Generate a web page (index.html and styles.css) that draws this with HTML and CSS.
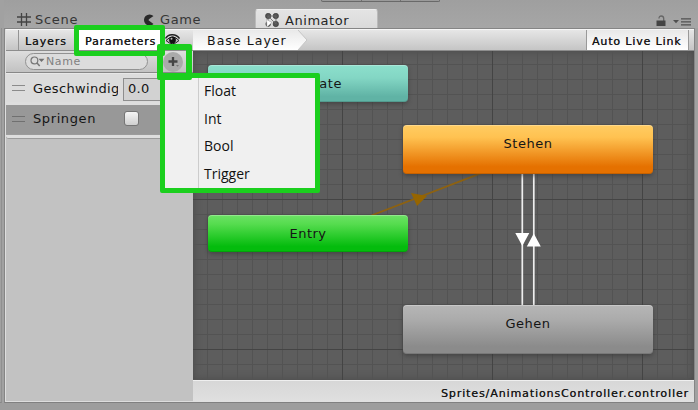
FILE: index.html
```html
<!DOCTYPE html>
<html lang="de">
<head>
<meta charset="utf-8">
<title>Animator</title>
<link rel="stylesheet" href="styles.css">
</head>
<body>
<div class="dock"></div>
<main class="window">
  <nav class="tabs">
    <div class="tab scene">
      <svg width="14" height="14" viewBox="0 0 14 14"><path d="M4.500 0v13M9.500 0v13M0 4h14M0 9h14" stroke="#444" stroke-width="1.3" fill="none"/></svg>
      <span>Scene</span>
    </div>
    <div class="tab game">
      <svg width="12" height="12" viewBox="0 0 12 12"><path d="M10.5 2A5.6 5.6 0 1 0 10.500 10L6.2 6.800Q5 6 6.200 5Z" fill="#292929"/></svg>
      <span>Game</span>
    </div>
    <div class="tab active">
      <svg width="15" height="15" viewBox="0 0 15 15"><g fill="#555" stroke="#333" stroke-width=".6"><circle cx="3.200" cy="3" r="2.700"/><circle cx="10.800" cy="3" r="2.700"/><circle cx="3.200" cy="11" r="2.400"/><circle cx="10.800" cy="11" r="2.700"/></g><path d="M3 3h8v8L3 3v8" fill="none" stroke="#666" stroke-width=".8"/><path d="M1.500 6.500 7 9.500 2 14Z" fill="#fff" stroke="#888" stroke-width=".4"/></svg>
      <span>Animator</span>
    </div>
    <div class="window-tools">
      <svg width="10" height="12" viewBox="0 0 10 12"><path d="M3 3.500Q3 1 5.300 1T7.700 3.500V6" fill="none" stroke="#666" stroke-width="1.300"/><path d="M.5 5.500h9V11h-9z" fill="#444"/></svg>
      <svg width="18" height="8" viewBox="0 0 18 8"><path d="M0 2h6L3 5.200ZM8 .2h10v1.400H8zM8 3.200h10v1.400H8zM8 6.200h10v1.400H8z" fill="#505050"/></svg>
    </div>
  </nav>
  <div class="panes">
    <aside class="sidebar">
      <div class="toolbar side-toolbar">
        <span class="spacer"></span>
        <span class="button layers">Layers</span>
        <span class="button parameters">Parameters</span>
        <svg class="eye" width="15" height="12" viewBox="0 0 15 12"><path d="M.5 4.500Q3 .5 7.500 .7T14.500 4.500" fill="none" stroke="#222" stroke-width="1.400"/><path d="M1 6.500Q7.500-.5 14 6.500Q7.500 13 1 6.500Z" fill="#bbb" stroke="#222"/><circle cx="7.500" cy="6" r="3.400" fill="#111"/><circle cx="6.500" cy="4.700" r="1" fill="#bbb"/></svg>
      </div>
      <div class="search-row">
        <div class="search">
          <svg width="15" height="11" viewBox="0 0 15 11"><circle cx="4.400" cy="4.400" r="3.400" fill="none" stroke="#777" stroke-width="1.200"/><path d="m7 7 2.700 3" stroke="#777" stroke-width="1.500"/><path d="M8.500 2.800h6L11.500 6Z" fill="#707070"/></svg>
          <span>Name</span>
        </div>
        <div class="add"><svg width="12" height="10" viewBox="0 0 12 10"><path d="M6 0v9M1.500 4.500h9" stroke="#444" stroke-width="2.300"/><path d="M9 8h3L10.500 9.700z" fill="#777"/></svg></div>
      </div>
      <div class="parameter">
        <i class="handle"></i><span class="name">Geschwindig</span><span class="value">0.0</span>
      </div>
      <div class="parameter selected">
        <i class="handle"></i><span class="name">Springen</span><span class="check"></span>
      </div>
      <div class="list-end"></div>
    </aside>
    <section class="graph-pane">
      <div class="toolbar graph-toolbar">
        <div class="breadcrumb">
          <svg width="115" height="20" viewBox="0 0 115 20"><defs><linearGradient id="crumb" x2="0" y2="1"><stop stop-color="#e9e9e9"/><stop offset="1" stop-color="#fff"/></linearGradient></defs><path d="M0 0H105L114 10 105 20H0Z" fill="url(#crumb)"/><path d="M105 0 114 10 105 20" fill="none" stroke="#c5c5c5"/></svg>
          <span>Base Layer</span>
        </div>
        <span class="live-link">Auto Live Link</span>
      </div>
      <div class="canvas">
        <svg class="graph" width="501" height="329" viewBox="193 51 501 329">
          <defs>
            <pattern id="minor" x="192" y="49" width="15" height="15" patternUnits="userSpaceOnUse"><path d="M.5 0v15M0 .5h15" stroke="#535353" fill="none"/></pattern>
            <pattern id="major" x="192" y="49" width="150" height="150" patternUnits="userSpaceOnUse"><path d="M.5 0v150M0 .5h150" stroke="#444" fill="none"/></pattern>
          </defs>
          <path d="M193 51h501v329H193z" fill="url(#minor)"/>
          <path d="M193 51h501v329H193z" fill="url(#major)"/>
          <path d="M308 240 528 155" stroke="#8e6210" stroke-width="1.800"/>
          <path d="m411 193 16 3-10 10z" fill="#966500"/>
          <path d="M522.300 150V330M533.800 150V330" stroke="#eee" stroke-width="1.700"/>
          <path d="M515.300 233h14l-7 13zM526.800 246.500h14l-7-13z" fill="#fff"/>
        </svg>
        <div class="node any">Any State</div>
        <div class="node entry">Entry</div>
        <div class="node stehen">Stehen</div>
        <div class="node gehen">Gehen</div>
      </div>
      <footer>Sprites/AnimationsController.controller</footer>
    </section>
  </div>
</main>
<div class="status"></div>
<div class="play-controls"><i></i><i></i><i></i></div>
<div class="mark mark-tab"></div>
<div class="menu"><div>Float</div><div>Int</div><div>Bool</div><div>Trigger</div></div>
<div class="mark mark-add"></div>
</body>
</html>
```
FILE: styles.css
```css
* { box-sizing: border-box; }
body {
  margin: 0;
  width: 698px;
  height: 410px;
  overflow: hidden;
  display: grid;
  grid-template-columns: 4px 1fr;
  grid-template-rows: 403px 7px;
  background: #a1a1a1;
  color: #151515;
  font: 12px "DejaVu Sans", sans-serif;
}
.dock { margin-top: 28px; border-right: 1px solid #909090; width: 2px; border-bottom: 1px solid #888; }
.status { grid-column: 1 / 3; background: #9d9d9d; }
.window { display: flex; flex-direction: column; }
.tabs {
  height: 28px;
  display: flex;
  align-items: flex-end;
  background: linear-gradient(#9f9f9f, #a6a6a6);
  color: #363636;
  font-size: 13px;
}
/* Lower edge of the play buttons that hang in from the main toolbar */
.play-controls {
  position: absolute;
  left: 321px;
  top: 0;
  width: 119px;
  height: 2px;
  display: grid;
  grid-template-columns: repeat(3, 1fr);
  background: #9a9a9a;
  border: 1px solid #696969;
  border-top: 0;
  border-radius: 0 0 3px 3px;
}
.play-controls i + i { border-left: 1px solid #707070; }
.tab { display: flex; align-items: center; height: 17px; white-space: nowrap; }
.tab.scene { margin-left: 13px; width: 126px; gap: 4px; letter-spacing: .7px; }
.tab.game { width: 112px; gap: 5px; letter-spacing: .6px; }
.tab.active {
  width: 123px;
  height: 19px;
  padding: 2px 0 0 9px;
  gap: 5px;
  color: #252525;
  background: linear-gradient(#e4e4e4, #dadada);
  border: 1px solid #bababa;
  border-top-color: #efefef;
  border-bottom: 0;
  border-radius: 3px 3px 0 0;
  letter-spacing: .55px;
}
.window-tools { display: flex; align-items: center; gap: 7px; margin: 0 0 1px auto; padding-right: 7px; }
.window-tools svg:last-child { margin-top: 2px; }
.panes {
  flex: 1;
  display: grid;
  grid-template-columns: 188px 501px;
  width: 691px;
  border: 1px solid #858585;
  border-bottom-color: #808080;
}
.toolbar {
  height: 22px;
  display: flex;
  align-items: center;
  background: linear-gradient(#e6e6e6, #c5c5c5);
  border-top: 1px solid #f6f6f6;
  border-bottom: 1px solid #8d8d8d;
  font-size: 11px;
}
.sidebar { background: #c2c2c2; border-left: 1px solid #dedede; border-bottom: 1px solid #ddd; }
.spacer { width: 13px; height: 20px; border-right: 1px solid #949494; }
.button { height: 20px; line-height: 23px; }
.layers { width: 58px; padding-left: 6px; letter-spacing: .9px; text-shadow: .2px 0 #444; }
.parameters { width: 88px; padding-left: 8px; background: #fff; letter-spacing: .8px; text-shadow: .3px 0 #333; }
.eye { margin: -1px 0 0 0; }
.search-row { height: 22px; display: flex; align-items: center; border-bottom: 1px solid #888; background: linear-gradient(#dedede, #c2c2c2); }
.search {
  width: 123px;
  height: 17px;
  margin-left: 19px;
  padding-left: 4px;
  display: flex;
  align-items: center;
  gap: 1px;
  color: #818181;
  background: #dcdcdc;
  border: 1px solid #929292;
  border-radius: 9px;
  font-size: 11px;
  letter-spacing: .6px;
}
.add { width: 20px; height: 20px; margin-left: 15px; border-radius: 50%; background: #aaa; display: grid; place-items: center; }
.parameter { height: 29px; display: flex; align-items: center; background: #dcdcdc; font-size: 13px; border-top: 1px solid #e7e7e7; }
.handle { width: 13px; height: 6px; margin-left: 6px; border: solid #8b8b8b; border-width: 1px 0; }
.name { width: 85px; margin-left: 8px; overflow: hidden; white-space: nowrap; letter-spacing: .35px; }
.value { width: 68px; height: 23px; margin: 2px 0 0 5px; padding-left: 4px; line-height: 19px; background: #d2d2d2; border: 1px solid #8e8e8e; letter-spacing: .3px; }
.selected { height: 32px; padding-bottom: 2px; background: #989898; border-top: 3px solid #dedede; }
.selected .handle { border-color: #707070; }
.selected .name { letter-spacing: .6px; }
.check { width: 15px; height: 15px; margin-left: 6px; border: 1px solid #757575; border-radius: 3px; background: linear-gradient(#f5f5f5, #cfcfcf); }
.list-end { height: 5px; background: #dedede; border: solid #9c9c9c; border-width: 1px 0; border-radius: 0 0 3px 3px; }
.graph-pane { display: flex; flex-direction: column; min-width: 0; }
.breadcrumb { display: grid; height: 20px; align-items: center; font-size: 12.5px; letter-spacing: 1.05px; }
.breadcrumb > * { grid-area: 1 / 1; }
.breadcrumb span { padding-left: 14px; }
.live-link { margin-left: auto; margin-right: 5px; width: 103px; height: 20px; padding-left: 5px; line-height: 23px; background: linear-gradient(#e8e8e8, #fff); border: solid #999; border-width: 0 1px; letter-spacing: .85px; text-shadow: .2px 0 #444; white-space: nowrap; }
.canvas { position: relative; height: 329px; background: #5d5d5d; box-shadow: inset 0 0 9px #484848; overflow: hidden; }
.graph { display: block; }
.node {
  position: absolute;
  height: 37px;
  width: 200px;
  border-radius: 4px;
  line-height: 37px;
  text-align: center;
  font-size: 13px;
  letter-spacing: .5px;
  box-shadow: 0 2px 4px #3338, inset 0 1px #fff4, inset 0 -1px #0002;
}
.any { left: 15px; top: 14px; background: linear-gradient(#8ce0cc, #83d6c4 35%, #60b3a5 85%); }
.entry { left: 15px; top: 164px; background: linear-gradient(#6ce265, #55dc4e 25%, #04bc0d 85%); }
.stehen, .gehen { left: 210px; width: 250px; height: 49px; }
.stehen { top: 74px; background: linear-gradient(#ffcc62, #ffc251 25%, #e57100 85%); }
.gehen { top: 254px; background: linear-gradient(#b6b6b6, #ababab 30%, #8b8b8b 85%); }
footer { height: 22px; padding-right: 5px; line-height: 26px; text-align: right; white-space: nowrap; font-size: 11px; letter-spacing: .9px; text-shadow: .2px 0 #444; background: linear-gradient(#d7d7d7, #e0e0e0); border-top: 1px solid #efefef; }
.mark, .menu { position: absolute; border: 5px solid #1bcf1e; border-radius: 2px; }
.mark-tab { left: 74px; top: 25px; width: 91px; height: 31px; }
.mark-add { left: 157px; top: 44px; width: 35px; height: 36px; border-width: 6px; }
.menu {
  left: 160px;
  top: 73px;
  width: 160px;
  height: 120px;
  padding: 0 0 0 39px;
  background: linear-gradient(#ccc, #ccc) 33px 0 / 1px 100% no-repeat #f0f0f0;
  color: #111;
  font: 14px/27.7px "Open Sans", sans-serif;
  letter-spacing: 0;
}
.menu div:first-child { margin-top: -1px; }
```
